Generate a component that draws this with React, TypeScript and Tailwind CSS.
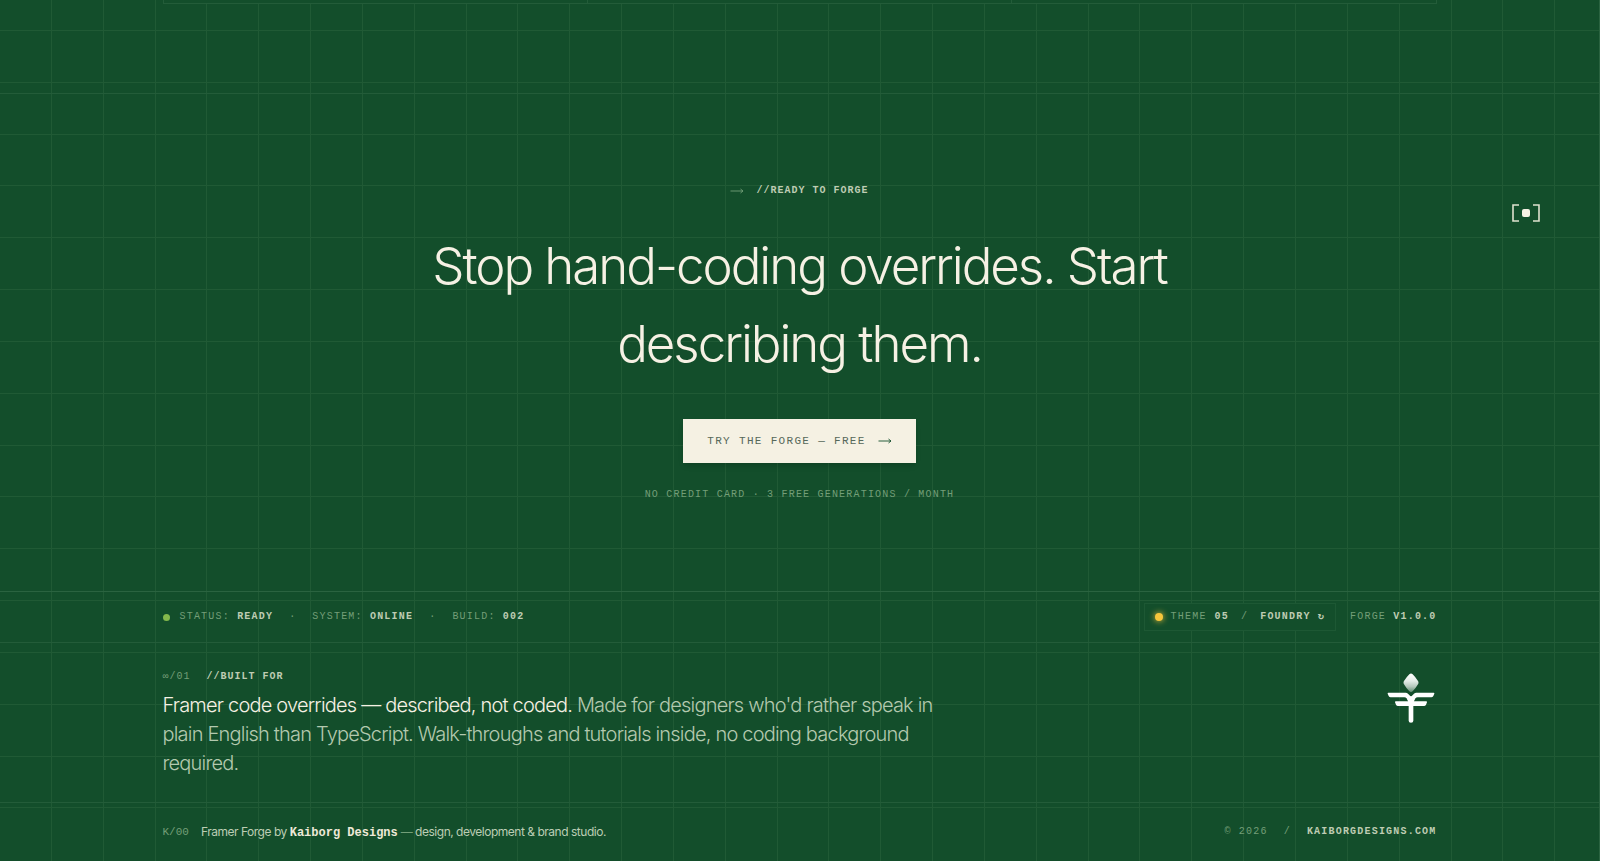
import { type FC, type ReactNode } from "react";

const Label: FC<{ children: ReactNode }> = ({ children }) => (
  <span className="font-normal text-[#739e78]">{children}</span>
);

const Value: FC<{ children: ReactNode }> = ({ children }) => (
  <span className="font-bold text-[#bfccb3]">{children}</span>
);

const Arrow: FC<{ className: string }> = ({ className }) => (
  <svg viewBox="0 0 14 6" className={className} fill="none" stroke="currentColor" strokeWidth="0.9" aria-hidden="true">
    <path d="M0.5 3H13M10.5 1L13 3L10.5 5" />
  </svg>
);

const Logo: FC = () => (
  <svg viewBox="0 0 144 150" className="h-[50px] w-12" fill="#fff" role="img" aria-label="Kaiborg Designs">
    <defs>
      <linearGradient id="flame" x1="0" y1="0" x2="0" y2="1">
        <stop offset="0" stopColor="#fff" />
        <stop offset="0.4" stopColor="#e4ece7" />
        <stop offset="0.7" stopColor="#b4c8bc" />
        <stop offset="1" stopColor="#5f8a70" />
      </linearGradient>
    </defs>
    <path d="M67 4Q72 -1 77 4Q86 13 93 24Q96 29 93 34Q86 46 77 55Q72 60 67 55Q58 46 51 34Q48 29 51 24Q58 13 67 4Z" fill="url(#flame)" />
    <path d="M4 59H56Q60 59 63 62L72 71L81 62Q84 59 88 59H140Q143 59 142 62L139 69Q137 73 133 73H92Q88 73 85 76L79 85H117Q121 85 120 88L117 95Q115 99 111 99H79V143Q79 149 72 149Q65 149 65 143V99H33Q29 99 27 95L24 88Q23 85 27 85H65L59 76Q56 73 52 73H11Q7 73 5 69L2 62Q1 59 4 59Z" />
    <path d="M58 72L72 70L86 72L80 88H64Z" />
  </svg>
);

const statusItems = [
  { label: "Status:", value: "Ready" },
  { label: "System:", value: "Online" },
  { label: "Build:", value: "002" },
];

const monoSmall = "font-['Liberation_Mono',monospace] text-[10px] leading-4 tracking-[0.12em] uppercase";

export default function App() {
  return (
    <div className="min-h-screen border-r border-[#2a6340] bg-[#134e2b] bg-[repeating-linear-gradient(to_right,transparent_0,transparent_calc(3.24vw-1px),#205a35_calc(3.24vw-1px),#205a35_3.24vw),repeating-linear-gradient(to_bottom,transparent_0,transparent_calc(3.24vw-1px),#205a35_calc(3.24vw-1px),#205a35_3.24vw)] bg-[position:0_0,0_-21px] font-[Inter,sans-serif] text-[#f6f1e4]">
      {/* Tail of the feature cards */}
      <div className="mx-auto grid h-1 w-full max-w-[1274px] grid-cols-3 divide-x divide-[#235c39] border-x border-b border-[#235c39] bg-[#134e2b]">
        <div />
        <div />
        <div />
      </div>

      <section className="mt-[89px] flex flex-col items-center border-t border-[#235c39] px-6 pt-[89px] pb-[88px] text-center">
        <p className="flex items-center gap-3 font-['Liberation_Mono',monospace] text-[10px] leading-4 tracking-widest uppercase">
          <Arrow className="h-1.5 w-3.5 text-[#739e78]" />
          <Value>//Ready to forge</Value>
        </p>
        <h1 className="mt-7 max-w-[800px] text-[51px] leading-[78px] font-light tracking-[-0.04em]">
          Stop hand-coding overrides. Start describing them.
        </h1>
        <button
          type="button"
          className="mt-9 flex h-11 items-center gap-3 bg-[#f5f1e3] px-6 font-['Liberation_Mono',monospace] text-[11px] tracking-[0.12em] text-[#56685a] uppercase shadow-md"
        >
          Try the Forge — Free
          <Arrow className="h-1.5 w-3.5 text-[#134e2b]" />
        </button>
        <p className={`${monoSmall} mt-6 text-[#739e78]`}>No credit card · 3 free generations / month</p>
      </section>

      <footer className="border-t border-[#2a6340]">
        <div className="border-b border-[#235c39]">
          <div className={`${monoSmall} mx-auto flex h-[50px] max-w-[1274px] items-center justify-between`}>
            <div className="flex items-center">
              <span className="mr-2.5 size-[7px] rounded-full bg-[#84b84c]" />
              {statusItems.map((item, index) => (
                <span key={item.label} className="flex items-center">
                  {index > 0 && <span className="mx-4 text-[#739e78]">·</span>}
                  <span>
                    <Label>{item.label}</Label> <Value>{item.value}</Value>
                  </span>
                </span>
              ))}
            </div>
            <div className="flex items-center gap-3.5">
              <button type="button" className="flex h-7 items-center border border-[#1d5834] bg-[#134e2b] px-2.5 tracking-[0.12em] uppercase">
                <span className="mr-2 size-2 rounded-full bg-[#f6c63c] shadow-[0_0_6px_#f6c63c]" />
                <Label>Theme</Label>
                <span className="ml-2"><Value>05</Value></span>
                <span className="mx-3"><Label>/</Label></span>
                <Value>Foundry ↻</Value>
              </button>
              <span>
                <Label>Forge</Label> <Value>v1.0.0</Value>
              </span>
            </div>
          </div>
        </div>

        <div className="border-b border-[#235c39]">
          <div className="mx-auto flex max-w-[1274px] items-start justify-between pt-[26px] pb-6">
            <div className="max-w-[780px]">
              <p className="flex gap-4 font-['Liberation_Mono',monospace] text-[10px] leading-4 tracking-widest uppercase">
                <Label>∞/01</Label>
                <Value>//Built for</Value>
              </p>
              <p className="mt-1.5 text-xl leading-[29px] font-light tracking-[-0.04em] text-[#b3c9af]">
                <span className="text-[#f6f1e4]">Framer code overrides — described, not coded.</span> Made for designers
                who'd rather speak in plain English than TypeScript. Walk-throughs and tutorials inside, no coding
                background required.
              </p>
            </div>
            <a href="#top" className="mt-1 mr-0.5">
              <Logo />
            </a>
          </div>
        </div>

        <div className="mx-auto flex h-[58px] max-w-[1274px] items-center justify-between">
          <p className="flex items-center text-xs tracking-[-0.04em] text-[#bccdb4]">
            <span className="mr-3 font-['Liberation_Mono',monospace] text-[11px] tracking-normal text-[#739e78]">K/00</span>
            <span>
              Framer Forge by{" "}
              <a href="#studio" className="font-['Liberation_Mono',monospace] font-bold tracking-normal text-[#eee9d8]">Kaiborg Designs</a>{" "}
              <Label>—</Label> design, development &amp; brand studio.
            </span>
          </p>
          <p className={`${monoSmall} flex gap-4`}>
            <Label>© 2026</Label>
            <Label>/</Label>
            <a href="#site"><Value>kaiborgdesigns.com</Value></a>
          </p>
        </div>
      </footer>

      {/* Floating menu toggle */}
      <button type="button" aria-label="Menu" className="fixed top-[202px] right-[59px] flex h-[22px] w-[30px] items-center justify-center">
        <svg viewBox="0 0 30 22" className="h-full w-full" fill="none" stroke="#e0e2cf" strokeWidth="1.6">
          <path d="M8 3H2V19H8M22 3H28V19H22" />
          <rect x="11" y="7" width="8" height="8" rx="2" fill="#f6f1e4" stroke="none" />
        </svg>
      </button>
    </div>
  );
}
